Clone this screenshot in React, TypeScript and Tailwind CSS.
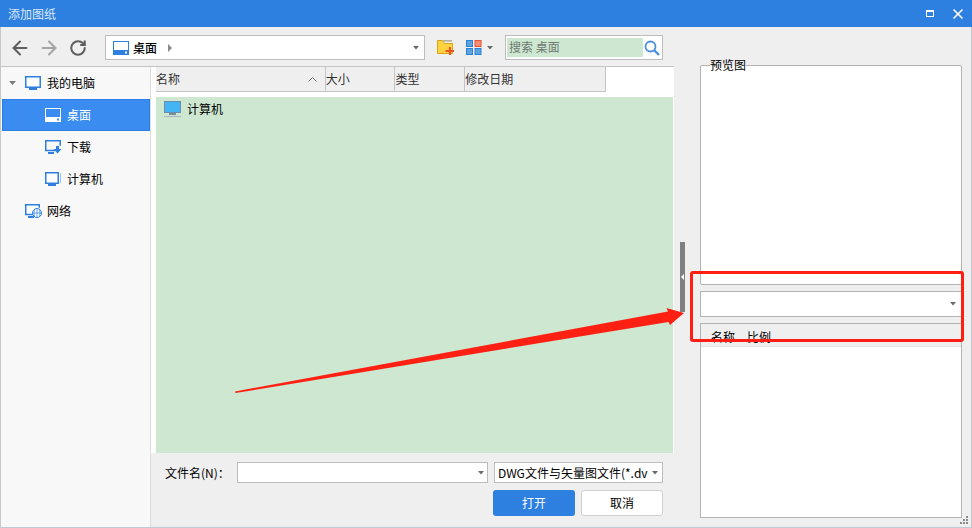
import React from 'react';
import { ArrowLeft, ArrowRight, RotateCw, X } from 'lucide-react';

const Caret: React.FC<{ className?: string }> = ({ className = '' }) => (
  <svg width="6" height="4" viewBox="0 0 6 4" className={className}>
    <path d="M0 0h6L3 3.500z" fill="#6b6b6b" />
  </svg>
);

const DesktopIcon: React.FC<{ light?: boolean }> = ({ light }) => {
  const c = light ? '#ffffff' : '#2d7fe0';
  const inner = light ? '#3a8cf0' : '#ffffff';
  return (
    <svg width="16" height="14" viewBox="0 0 16 14">
      <rect x="0.5" y="0.5" width="15" height="13" fill={inner} stroke={c} />
      <rect x="0" y="9" width="16" height="5" fill={c} />
      <rect x="12" y="10.5" width="2" height="2" fill={inner} />
    </svg>
  );
};

const MonitorIcon: React.FC = () => (
  <svg width="16" height="14" viewBox="0 0 16 14">
    <rect x="0.750" y="0.750" width="14.500" height="10.500" fill="#fff" stroke="#2d7fe0" strokeWidth="1.5" />
    <path d="M4 13h8" stroke="#2d7fe0" strokeWidth="2" />
  </svg>
);

const DownloadIcon: React.FC = () => (
  <svg width="17" height="14" viewBox="0 0 17 14">
    <path d="M10 10.5H0.750V0.750h14.500v5" fill="none" stroke="#2d7fe0" strokeWidth="1.5" />
    <path d="M3 13h6" stroke="#2d7fe0" strokeWidth="2" />
    <path d="M11 6h3v3h2.500l-4 4.500-4-4.500H11z" fill="#2d7fe0" />
  </svg>
);

const ComputerIcon: React.FC = () => (
  <svg width="16" height="14" viewBox="0 0 16 14">
    <rect x="0.750" y="0.750" width="12.500" height="10.500" fill="#fff" stroke="#2d7fe0" strokeWidth="1.5" />
    <path d="M15.500 1v10" stroke="#9dc3ef" />
    <path d="M3 13h8" stroke="#2d7fe0" strokeWidth="2" />
  </svg>
);

const NetworkIcon: React.FC = () => (
  <svg width="17" height="14" viewBox="0 0 17 14">
    <path d="M8 10.500H0.750V0.750h13.500v3" fill="#fff" stroke="#2d7fe0" strokeWidth="1.5" />
    <path d="M3 13h6" stroke="#2d7fe0" strokeWidth="2" />
    <circle cx="12" cy="9" r="4.500" fill="#fff" stroke="#2d7fe0" />
    <path d="M7.500 9h9M12 4.500v9M9.500 5.500q-1 3.500 0 7M14.500 5.500q1 3.500 0 7" fill="none" stroke="#2d7fe0" strokeWidth="0.7" />
  </svg>
);

const ColorMonitor: React.FC = () => (
  <svg width="17" height="16" viewBox="0 0 17 16">
    <rect x="0.500" y="0.500" width="16" height="11" fill="#45b4f5" stroke="#6b8fa8" />
    <path d="M5 13h7" stroke="#7a8c99" strokeWidth="2" />
    <path d="M0 15.500h17" stroke="#a9b4c4" />
  </svg>
);

const FolderAdd: React.FC = () => (
  <svg width="17" height="15" viewBox="0 0 17 15">
    <path d="M0.500 13.500V0.500h5l2 3h8v10z" fill="#ffd23f" stroke="#d9a514" />
    <path d="M6 0.800h9" stroke="#b3ab94" strokeWidth="1.500" />
    <path d="M12 7h2v3h3v2h-3v3h-2v-3H8.500v-2H12z" fill="#f0532a" />
  </svg>
);

const ViewIcon: React.FC = () => (
  <svg width="16" height="15" viewBox="0 0 16 15">
    <rect x="0.500" y="0.500" width="6" height="6" fill="#5aa5dc" stroke="#2d7fe0" />
    <rect x="9" y="0.500" width="6" height="6" fill="#ff8a75" stroke="#e2532f" />
    <rect x="0.500" y="8.500" width="6" height="6" fill="#5aa5dc" stroke="#2d7fe0" />
    <rect x="9" y="8.500" width="6" height="6" fill="#5aa5dc" stroke="#2d7fe0" />
  </svg>
);

const SearchIcon: React.FC = () => (
  <svg width="16" height="16" viewBox="0 0 16 16">
    <circle cx="6.500" cy="6.500" r="5" fill="none" stroke="#4a90dc" strokeWidth="1.800" />
    <path d="M10 10l5 5" stroke="#4a90dc" strokeWidth="2.400" />
  </svg>
);

const headers = [
  { label: '大小', width: 'w-[70px]' },
  { label: '类型', width: 'w-[70px]' },
  { label: '修改日期', width: 'w-[140px]' },
];

const App: React.FC = () => {
  return (
    <div
      className="relative w-[972px] h-[528px] flex flex-col overflow-hidden bg-[#efefef] text-[12px] text-black"
      style={{ fontFamily: '"Noto Sans CJK SC", "Liberation Sans", sans-serif' }}
    >
      {/* title bar */}
      <div className="h-[27px] shrink-0 bg-[#2d7fe0] flex items-center pl-[8px] pr-[5px] text-[#dbe9fa]">
        <span className="flex-1">添加图纸</span>
        <div className="w-[8px] h-[7px] border border-t-2 border-white mr-[16px]" />
        <X size={16} strokeWidth={2.5} className="text-white mr-[1px]" />
      </div>

      <div className="flex-1 min-h-0 flex border-x border-b border-[#c3c9d1]">
        {/* file browser */}
        <div className="w-[673px] shrink-0 flex flex-col">
          <div className="h-[40px] shrink-0 border-b border-[#c4c4c4] flex items-center pl-[8px] pt-[2px]">
            <ArrowLeft size={22} strokeWidth={2.2} className="text-[#5e5e5e]" />
            <ArrowRight size={22} strokeWidth={2.2} className="text-[#a5a5a5] ml-[7px]" />
            <RotateCw size={18} strokeWidth={2.7} className="text-[#5e5e5e] ml-[9px]" />
            <div className="ml-[18px] w-[320px] h-[25px] bg-white border border-[#bdbdbd] flex items-center pl-[7px] pr-[5px]">
              <DesktopIcon />
              <span className="ml-[4px] font-medium">桌面</span>
              <svg width="4" height="8" viewBox="0 0 4 8" className="ml-[11px]">
                <path d="M0 0l4 4-4 4z" fill="#8a8a8a" />
              </svg>
              <Caret className="ml-auto" />
            </div>
            <div className="ml-[12px]"><FolderAdd /></div>
            <div className="ml-[12px]"><ViewIcon /></div>
            <Caret className="ml-[5px]" />
            <div className="ml-[12px] w-[158px] h-[25px] bg-white border border-[#bdbdbd] flex items-center pl-[1px] pr-[2px]">
              <div className="w-[138px] h-[19px] bg-[#cde7d0] pl-[2px] leading-[18px] text-[#6f7a70]">搜索 桌面</div>
              <div className="ml-[1px]"><SearchIcon /></div>
            </div>
          </div>

          <div className="flex-1 min-h-0 flex">
            {/* sidebar */}
            <div className="w-[150px] shrink-0 bg-[#f8f8f8] border-r border-[#dcdcdc] pl-[1px]">
              <div className="h-[32px] flex items-center pl-[7px]">
                <svg width="7" height="4" viewBox="0 0 7 4"><path d="M0 0h7L3.500 4z" fill="#7a7a7a" /></svg>
                <div className="ml-[9px]"><MonitorIcon /></div>
                <span className="ml-[6px]">我的电脑</span>
              </div>
              <div className="h-[32px] w-[148px] flex items-center pl-[42px] bg-[#3a8cf0] border border-[#2d7fe0] text-white">
                <DesktopIcon light />
                <span className="ml-[6px]">桌面</span>
              </div>
              {[
                { label: '下载', icon: <DownloadIcon /> },
                { label: '计算机', icon: <ComputerIcon /> },
              ].map((item) => (
                <div key={item.label} className="h-[32px] flex items-center pl-[43px]">
                  <div className="w-[16px]">{item.icon}</div>
                  <span className="ml-[6px]">{item.label}</span>
                </div>
              ))}
              <div className="h-[32px] flex items-center pl-[23px]">
                <div className="w-[17px]"><NetworkIcon /></div>
                <span className="ml-[5px]">网络</span>
              </div>
            </div>

            {/* list and file fields */}
            <div className="flex-1 min-w-0 flex flex-col">
              <div className="h-[386px] shrink-0 bg-white pl-[5px] flex flex-col">
                <div className="w-[450px] h-[25px] shrink-0 flex bg-[#efefef] border-b border-r border-[#c4c4c4] text-[#333]">
                  <div className="w-[170px] flex items-center justify-between border-r border-[#c4c4c4] pr-[8px]">
                    <span>名称</span>
                    <svg width="9" height="5" viewBox="0 0 9 5"><path d="M0.500 4.500l4-4 4 4" fill="none" stroke="#777" /></svg>
                  </div>
                  {headers.map((h, i) => (
                    <div key={h.label} className={`${h.width} flex items-center ${i < 2 ? 'border-r border-[#c4c4c4]' : ''}`}>
                      {h.label}
                    </div>
                  ))}
                </div>
                <div className="mt-[5px] mr-[1px] flex-1 bg-[#cde7d0] pl-[8px] pt-[4px]">
                  <div className="flex items-center h-[16px]">
                    <ColorMonitor />
                    <span className="ml-[6px]">计算机</span>
                  </div>
                </div>
              </div>

              <div className="flex-1 pl-[14px] pr-[11px] pt-[9px]">
                <div className="flex items-center">
                  <span className="w-[72px] shrink-0">文件名(N)：</span>
                  <div className="w-[251px] h-[21px] bg-white border border-[#bdbdbd] flex items-center justify-end pr-[3px]">
                    <Caret />
                  </div>
                  <div className="ml-[6px] w-[169px] h-[21px] bg-white border border-[#bdbdbd] flex items-center pl-[3px] pr-[4px] overflow-hidden whitespace-nowrap">
                    <span className="flex-1 overflow-hidden">DWG文件与矢量图文件(*.dv</span>
                    <Caret />
                  </div>
                </div>
                <div className="flex justify-end gap-[6px] mt-[7px]">
                  <button className="w-[82px] h-[26px] rounded-[3px] bg-[#2d7fe0] text-white">打开</button>
                  <button className="w-[82px] h-[26px] rounded-[3px] bg-white border border-[#d0d0d0]">取消</button>
                </div>
              </div>
            </div>
          </div>
        </div>

        {/* splitter */}
        <div className="w-[11px] shrink-0 flex items-center justify-end">
          <div className="w-[5px] h-[70px] bg-[#808080] flex items-center justify-center">
            <svg width="3" height="6" viewBox="0 0 3 6"><path d="M3 0v6L0 3z" fill="#fff" /></svg>
          </div>
        </div>

        {/* preview side */}
        <div className="flex-1 min-w-0 pl-[15px] pr-[9px] pt-[38px] pb-[9px] flex flex-col">
          <div className="relative h-[220px] shrink-0 bg-white border border-[#b3b3b3] rounded-[2px]">
            <span className="absolute left-[9px] top-[-8px] h-[16px] leading-[14px] bg-linear-to-b from-[#efefef] from-50% to-white to-50%">预览图</span>
          </div>
          <div className="mt-[6px] h-[26px] shrink-0 bg-white border border-[#b3b3b3] flex items-center justify-end pr-[5px]">
            <Caret />
          </div>
          <div className="mt-[6px] flex-1 bg-white border border-[#b3b3b3] min-h-0">
            <div className="h-[23px] bg-[#efefef] border-b border-[#e2e2e2] flex items-center pl-[10px] pt-[3px]">
              <span className="w-[36px]">名称</span>
              <span>比例</span>
            </div>
          </div>
        </div>
      </div>

      {/* resize grip */}
      <svg width="9" height="9" viewBox="0 0 9 9" className="absolute right-[3px] bottom-[3px]">
        <path d="M6 0h2v2H6zM3 3h2v2H3zM6 3h2v2H6zM0 6h2v2H0zM3 6h2v2H3zM6 6h2v2H6z" fill="#8a8a8a" />
      </svg>

      {/* annotation laid over the dialog */}
      <div className="absolute left-[690px] top-[271px] w-[274px] h-[71px] border-[3px] border-[#ff1e14] rounded-[3px]" />
      <svg width="972" height="528" viewBox="0 0 972 528" className="absolute left-0 top-0 pointer-events-none">
        <path d="M235 391.500L668 311.500L666.500 308L684 313L670 325L668.500 322L235.500 393z" fill="#ff2014" />
      </svg>
    </div>
  );
};

export default App;
